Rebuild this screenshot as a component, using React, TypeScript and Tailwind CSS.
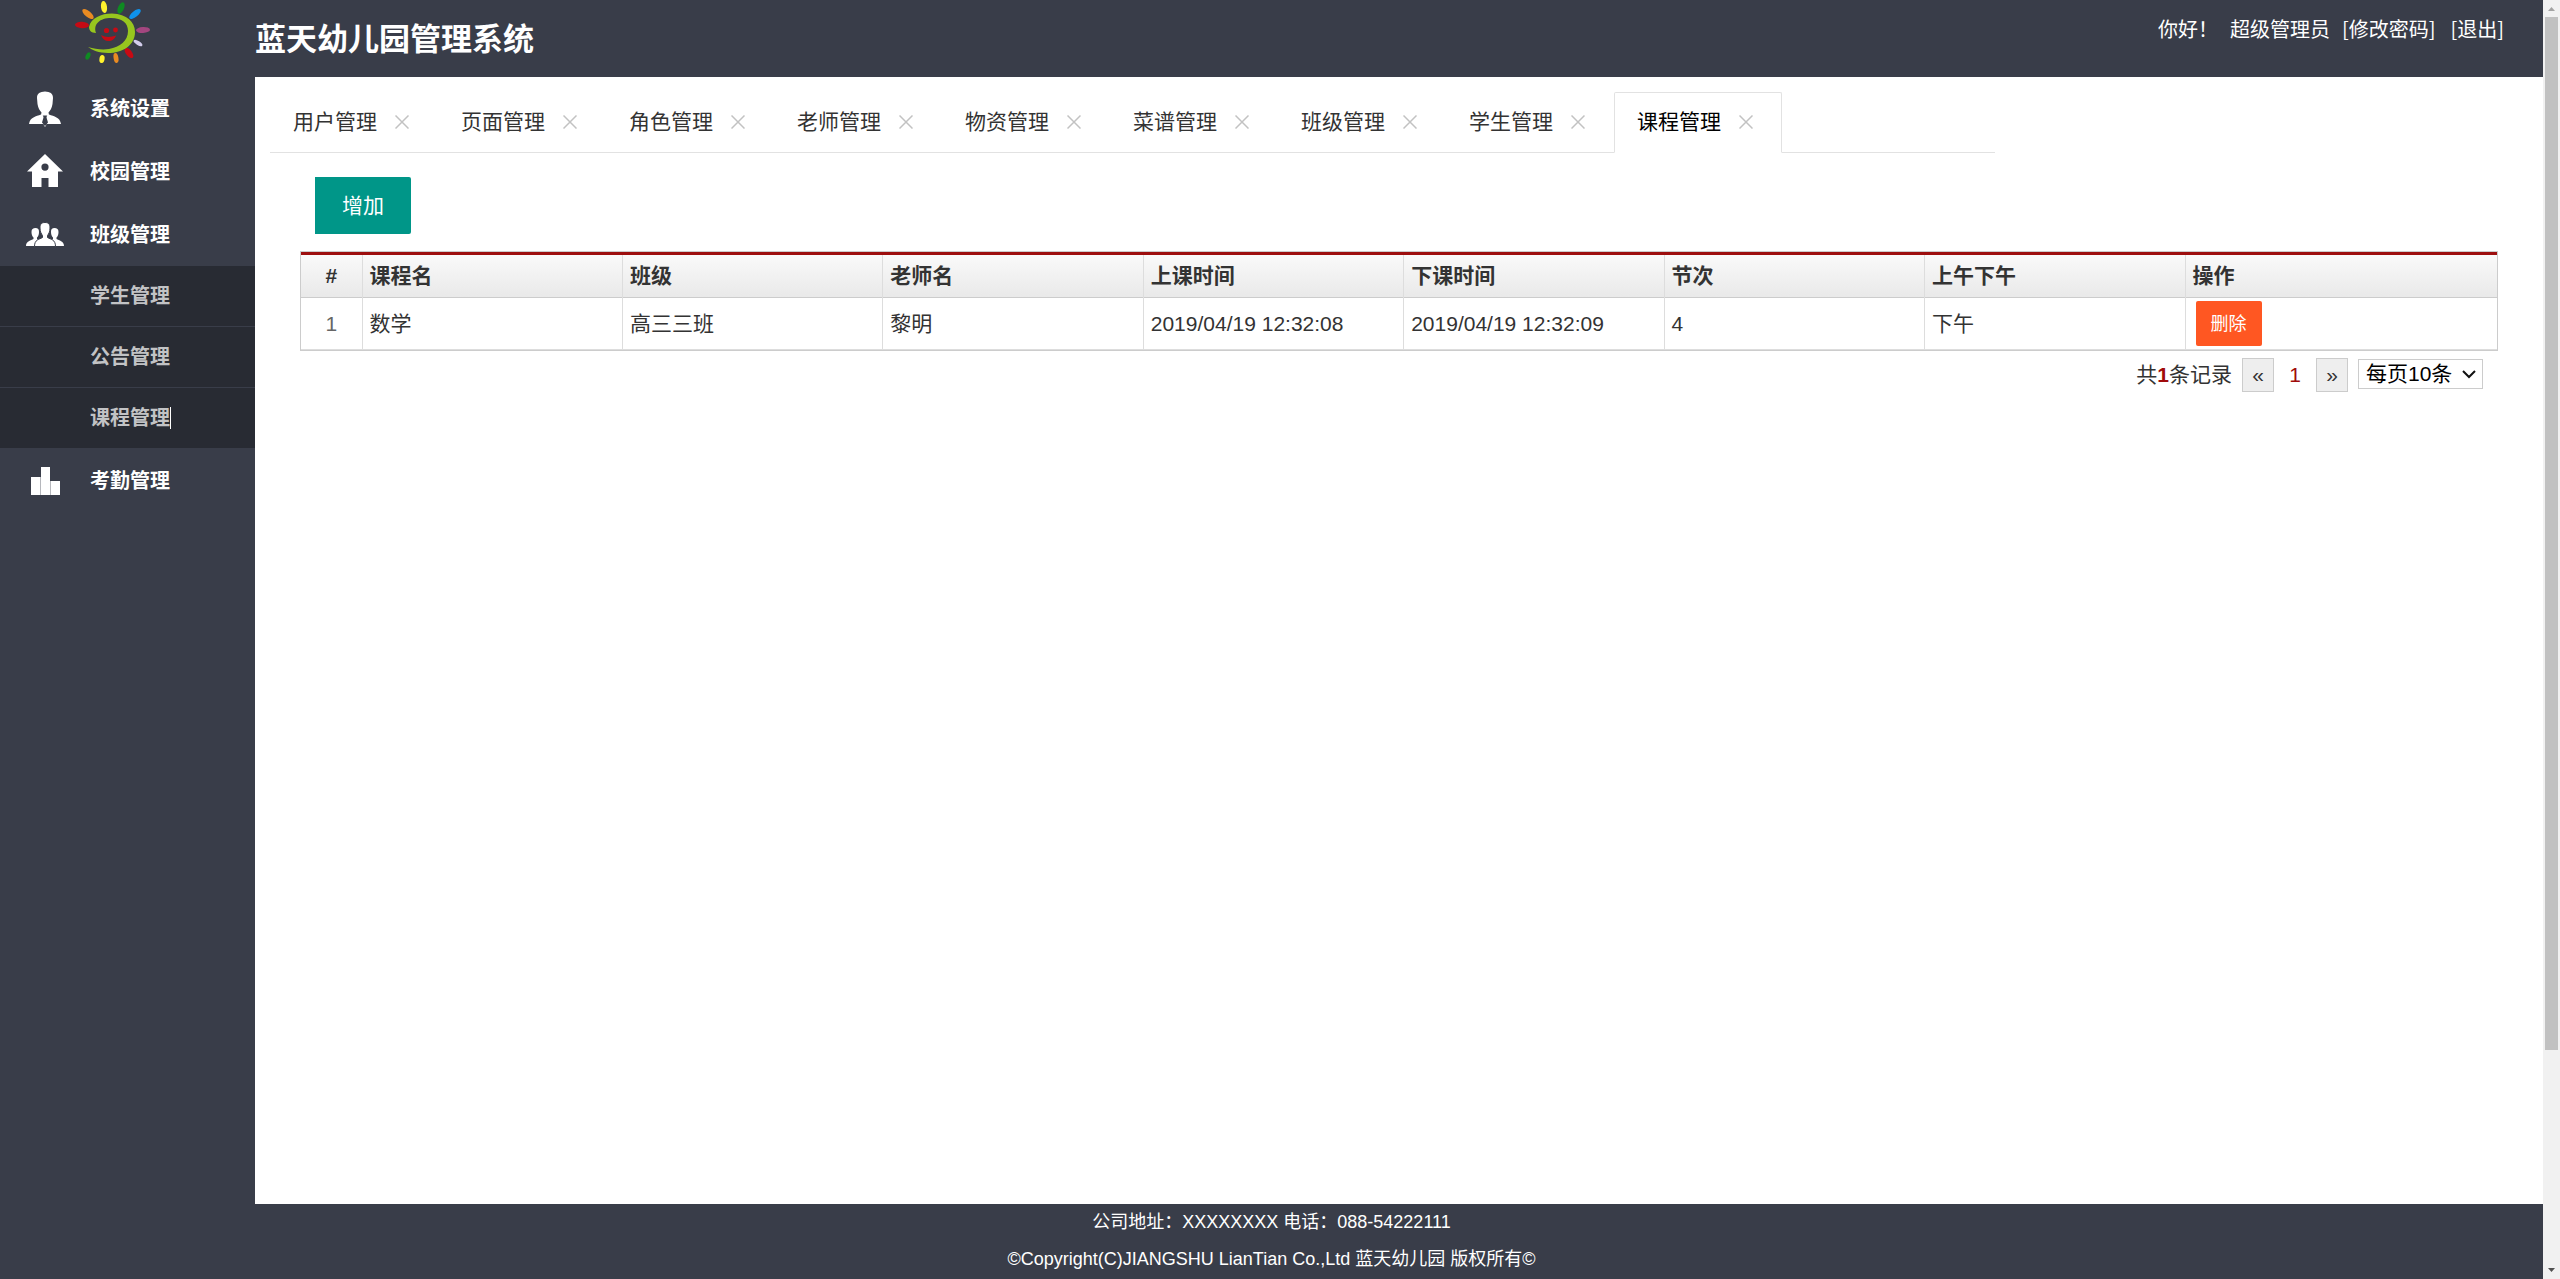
import React from "react";

const tabs = ["用户管理", "页面管理", "角色管理", "老师管理", "物资管理", "菜谱管理", "班级管理", "学生管理", "课程管理"];
const activeTab = "课程管理";

const columns = ["课程名", "班级", "老师名", "上课时间", "下课时间", "节次", "上午下午"];
const rows = [["数学", "高三三班", "黎明", "2019/04/19 12:32:08", "2019/04/19 12:32:09", "4", "下午"]];

function Logo() {
  return (
    <svg width="76" height="64" viewBox="0 0 76 64" aria-label="蓝天幼儿园" role="img">
      <g>
        <ellipse cx="29" cy="7" rx="3" ry="6" fill="#fff22d" transform="rotate(-8 29 7)" />
        <ellipse cx="46" cy="8" rx="3" ry="6" fill="#0f8a22" transform="rotate(24 46 8)" />
        <ellipse cx="60" cy="14" rx="3" ry="7" fill="#0f92ea" transform="rotate(52 60 14)" />
        <ellipse cx="68" cy="30" rx="7" ry="3" fill="#a4467f" transform="rotate(-3 68 30)" />
        <ellipse cx="63" cy="43" rx="5" ry="2" fill="#d3cdec" transform="rotate(32 63 43)" />
        <ellipse cx="54" cy="53" rx="3" ry="6" fill="#c70a14" transform="rotate(-38 54 53)" />
        <ellipse cx="41" cy="58" rx="2.4" ry="5" fill="#e98b22" transform="rotate(-10 41 58)" />
        <ellipse cx="27" cy="59" rx="2.6" ry="4" fill="#fff22d" transform="rotate(8 27 59)" />
        <ellipse cx="13" cy="56" rx="2.2" ry="3.8" fill="#0f8a22" transform="rotate(26 13 56)" />
        <ellipse cx="7" cy="25" rx="7" ry="3.2" fill="#c70a14" transform="rotate(4 7 25)" />
        <ellipse cx="13" cy="14" rx="3" ry="7" fill="#e98b22" transform="rotate(-50 13 14)" />
      </g>
      <path
        d="M21 33C16 33 14 30 14 27C16 18 26 13.500 37 13.500C52 14 60 22 60 32C60 45 48 53 33 53C24 53 17 50 13 47C20 49 27 50 34 49C45 47 53 41 53 31C53 23 47 18 36 18C25 18 18 24 21 33Z"
        fill="#97c61e"
      />
      <circle cx="31.500" cy="30.500" r="2.600" fill="#c70a14" />
      <circle cx="40.500" cy="30" r="2.400" fill="#c70a14" />
      <path d="M26 35C30 37.500 36 37.500 41 35.500C40 39 37 41 33.500 41C30 41 27.500 39 26 35Z" fill="#c70a14" />
    </svg>
  );
}

function PersonIcon() {
  return (
    <svg width="32" height="36" viewBox="0 0 32 36" fill="#fff" aria-hidden="true">
      <path d="M8 7C8 2 11 1 16 0.500C21 1 24 2 24 7L23.500 13C23 17 21 20 19.500 21.500L20 24L16 26L12 24L12.500 21.500C11 20 9 17 8.500 13Z" />
      <path d="M12 23.500L16 25.500L20 23.500C25 25.500 31 26 32 33H0C1 26 7 25.500 12 23.500Z" />
      <path d="M14 24.500H18L17.500 26.500L19 31.500L16 35L13 31.500L14.500 26.500Z" fill="#393d49" />
      <path d="M14 33L16 36L18 33L16 35Z" />
    </svg>
  );
}

function HomeIcon() {
  return (
    <svg width="36" height="36" viewBox="0 0 36 36" fill="#fff" aria-hidden="true">
      <path
        fillRule="evenodd"
        d="M18 0L36 17.500H31V33H21.500V24H14.500V33H5V17.500H0ZM18 9.500A3.600 3.600 0 1 0 18 16.700A3.600 3.600 0 1 0 18 9.500Z"
      />
    </svg>
  );
}

function GroupIcon() {
  return (
    <svg width="38" height="26" viewBox="0 0 38 26" fill="#fff" aria-hidden="true">
      <path d="M5.500 10C5.500 7 7 6 9.500 6C12 6 13 7 13 10C13 13 12 14.500 11 15.500V17C13 18 14 19 14 24H0C0 19 5 18.500 7.500 17V15.500C6.500 14.500 5.500 13 5.500 10Z" />
      <path d="M32.500 10C32.500 7 31 6 28.500 6C26 6 25 7 25 10C25 13 26 14.500 27 15.500V17C25 18 24 19 24 24H38C38 19 33 18.500 30.500 17V15.500C31.500 14.500 32.500 13 32.500 10Z" />
      <path
        d="M14 6C14 2 15.500 0.500 19 0.500C22.500 0.500 24 2 24 6C24 10 22.500 12 21.500 13.500V15.500C25 17.500 29.500 17.500 29.500 24.500H8.500C8.500 17.500 13 17.500 16.500 15.500V13.500C15.500 12 14 10 14 6Z"
        stroke="#393d49"
      />
    </svg>
  );
}

function BarsIcon() {
  return (
    <svg width="30" height="28" viewBox="0 0 30 28" fill="#fff" aria-hidden="true">
      <path d="M1 10H10V28H1Z" />
      <path d="M11 0H20V28H11Z" />
      <path d="M21 14H30V28H21Z" />
      <path d="M10 10H11V28H10ZM20 14H21V28H20Z" fill="#b5b7bc" />
    </svg>
  );
}

function MenuItem({ label, icon }: { label: string; icon: React.ReactNode }) {
  return (
    <a href="#" className="flex h-[63px] items-center text-xl font-bold text-white">
      <span className="flex w-[90px] justify-center">{icon}</span>
      {label}
    </a>
  );
}

function SubItem({ label, current = false }: { label: string; current?: boolean }) {
  return (
    <a
      href="#"
      className="flex h-[61px] items-center border-b border-[#393d49] bg-[#282b33] pl-[90px] text-xl font-bold text-[#c2c3c5]"
    >
      <span className={current ? "border-r border-white leading-[22px]" : "leading-[22px]"}>{label}</span>
    </a>
  );
}

function CloseIcon() {
  return (
    <svg width="14" height="14" viewBox="0 0 14 14" stroke="#c2c2c2" strokeWidth="1.500" aria-hidden="true">
      <path d="M0.500 0.500L13.500 13.500M13.500 0.500L0.500 13.500" />
    </svg>
  );
}

function Tab({ label, active }: { label: string; active: boolean }) {
  return (
    <li
      className={
        active
          ? "-mb-px flex h-[61px] w-[168px] items-center rounded-t-xs border border-b-white border-[#e2e2e2] pb-px pl-[22px] text-black"
          : "-mb-px flex h-[61px] w-[168px] items-center pb-px pl-[23px] text-[#333]"
      }
    >
      <button type="button">{label}</button>
      <button type="button" aria-label={"关闭" + label} className="ml-[18px]">
        <CloseIcon />
      </button>
    </li>
  );
}

function Scrollbar() {
  return (
    <div className="flex w-[17px] shrink-0 flex-col items-center justify-between bg-[#f1f1f1]" aria-hidden="true">
      <svg width="17" height="17" fill="#a3a3a3">
        <path d="M5 11L8.500 7L12 11Z" />
      </svg>
      <div className="w-[13px] grow-[1033] basis-0 bg-[#c1c1c1]" />
      <div className="grow-[212] basis-0" />
      <svg width="17" height="17" fill="#505050">
        <path d="M5 6L8.500 10L12 6Z" />
      </svg>
    </div>
  );
}

export default function App() {
  return (
    <div className="flex min-h-screen bg-[#393d49] font-['Liberation_Sans','Noto_Sans_CJK_SC',sans-serif] text-[21px] text-[#333]">
      <div className="flex min-w-0 flex-1 flex-col">
        <header className="flex h-[77px] items-start text-white">
          <div className="flex w-[255px] shrink-0 pl-[75px]">
            <Logo />
          </div>
          <h1 className="flex-1 pt-4 text-[31px] leading-[48px] font-bold">蓝天幼儿园管理系统</h1>
          <div className="flex pt-[14px] pr-[39px] text-xl leading-[30px] font-['Noto_Sans_CJK_SC',sans-serif]">
            <span>你好！</span>
            <span className="ml-3">超级管理员</span>
            <a href="#" className="ml-3">[修改密码]</a>
            <a href="#" className="ml-[15px]">[退出]</a>
          </div>
        </header>

        <div className="flex flex-1">
          <nav className="w-[255px] shrink-0">
            <MenuItem label="系统设置" icon={<PersonIcon />} />
            <MenuItem label="校园管理" icon={<HomeIcon />} />
            <MenuItem label="班级管理" icon={<GroupIcon />} />
            <SubItem label="学生管理" />
            <SubItem label="公告管理" />
            <SubItem label="课程管理" current />
            <MenuItem label="考勤管理" icon={<BarsIcon />} />
          </nav>

          <main className="min-w-0 flex-1 bg-white">
            <ul className="mt-[15px] ml-[15px] flex max-w-[1725px] border-b border-[#e2e2e2]">
              {tabs.map((t) => (
                <Tab key={t} label={t} active={t === activeTab} />
              ))}
            </ul>

            <div className="pr-[45px] pl-[45px]">
              <button
                type="button"
                className="mt-6 ml-[15px] block h-[57px] w-24 rounded-r-xs bg-[#009688] text-white"
              >
                增加
              </button>

              <div className="mt-[17px] border border-[#ccc]">
                <table className="w-full table-fixed border-collapse border-t-[3px] border-t-[#9d0f0f] text-left">
                  <colgroup>
                    <col className="w-[61px]" />
                    {columns.map((c) => (
                      <col key={c} />
                    ))}
                    <col className="w-[312px]" />
                  </colgroup>
                  <thead>
                    <tr className="h-[44px] border-b border-[#ccc] bg-linear-to-b from-[#fafafa] to-[#e9e9e9]">
                      <th className="border-r border-[#ddd] text-center">#</th>
                      {columns.map((c) => (
                        <th key={c} className="border-r border-[#ddd] pl-[7px]">
                          {c}
                        </th>
                      ))}
                      <th className="pl-[7px]">操作</th>
                    </tr>
                  </thead>
                  <tbody>
                    {rows.map((r, i) => (
                      <tr key={i} className="h-[52px] border-b border-[#ddd]">
                        <td className="border-r border-[#ddd] text-center text-[#666]">{i + 1}</td>
                        {r.map((v, j) => (
                          <td key={j} className="border-r border-[#ddd] pl-[7px]">
                            {v}
                          </td>
                        ))}
                        <td className="pl-[10px]">
                          <button
                            type="button"
                            className="block h-[45px] w-[66px] rounded-xs bg-[#ff5722] text-lg text-white"
                          >
                            删除
                          </button>
                        </td>
                      </tr>
                    ))}
                  </tbody>
                </table>
              </div>

              <div className="mt-[7px] flex items-start justify-end pr-[15px]">
                <span className="leading-[34px]">
                  共<b className="font-bold text-[#a00b0b]">1</b>条记录
                </span>
                <button type="button" aria-label="上一页" className="ml-[10px] h-[34px] w-8 border border-[#ccc] bg-[#eee]">
                  «
                </button>
                <span className="w-[42px] text-center leading-[34px] text-[#a00b0b]">1</span>
                <button type="button" aria-label="下一页" className="h-[34px] w-8 border border-[#ccc] bg-[#eee]">
                  »
                </button>
                <div className="relative mt-px ml-[10px] flex">
                  <select
                    aria-label="每页条数"
                    className="h-[30px] w-[125px] appearance-none border border-[#ccc] bg-white pl-[7px] leading-7 text-black"
                  >
                    <option>每页10条</option>
                  </select>
                  <svg
                    className="pointer-events-none absolute top-[11px] right-[7px]"
                    width="14"
                    height="9"
                    viewBox="0 0 14 9"
                    fill="none"
                    stroke="#111"
                    strokeWidth="2"
                    aria-hidden="true"
                  >
                    <path d="M1 1L7 7L13 1" />
                  </svg>
                </div>
              </div>
            </div>
          </main>
        </div>

        <footer className="h-[75px] text-center text-lg leading-[37px] text-white">
          <p>公司地址：XXXXXXXX 电话：088-54222111</p>
          <p>©Copyright(C)JIANGSHU LianTian Co.,Ltd 蓝天幼儿园 版权所有©</p>
        </footer>
      </div>
      <Scrollbar />
    </div>
  );
}
